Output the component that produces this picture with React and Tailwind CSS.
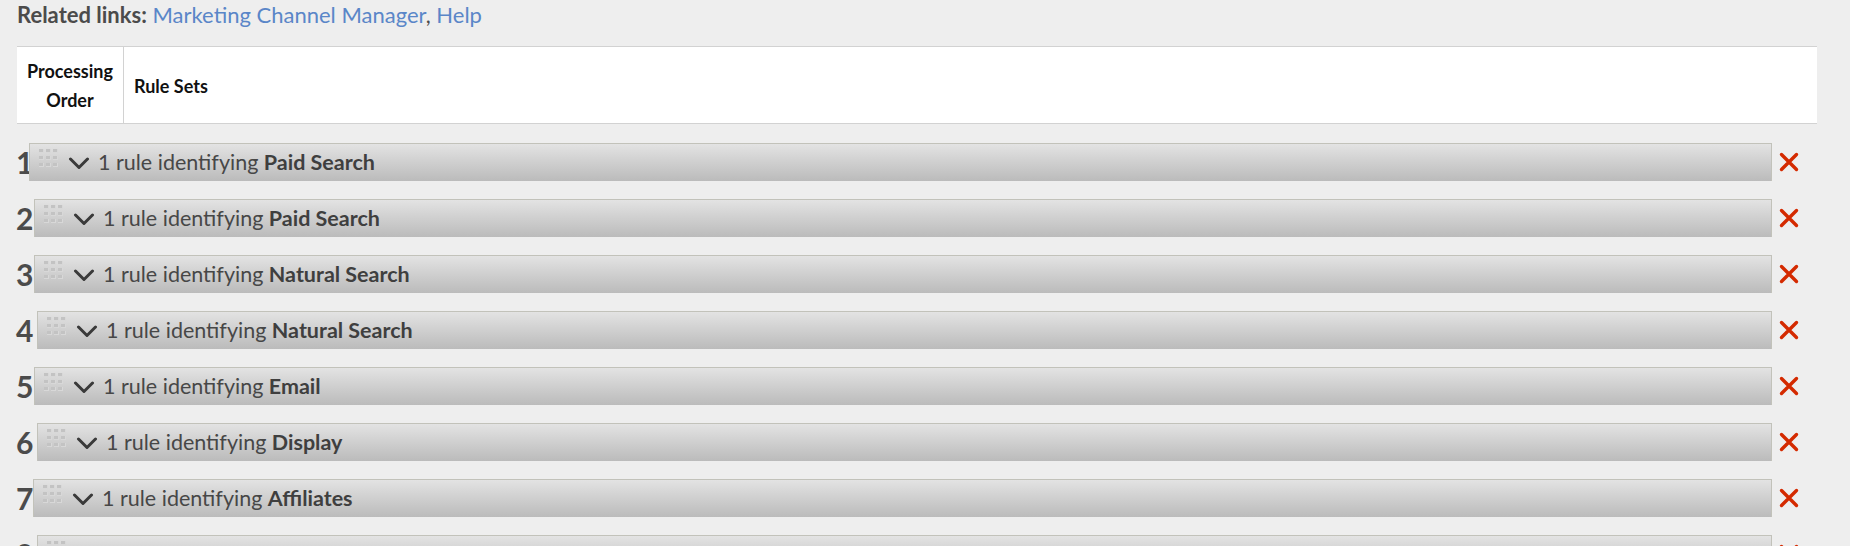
import React from "react";

const rows = [
  { n: "1", w: "w-[11px]", name: "Paid Search" },
  { n: "2", w: "w-[16px]", name: "Paid Search" },
  { n: "3", w: "w-[16px]", name: "Natural Search" },
  { n: "4", w: "w-[19px]", name: "Natural Search" },
  { n: "5", w: "w-[16px]", name: "Email" },
  { n: "6", w: "w-[19px]", name: "Display" },
  { n: "7", w: "w-[15px]", name: "Affiliates" },
  { n: "8", w: "w-[19px]", name: "Referring Domains" },
];

function Handle() {
  return (
    <div className="grid grid-cols-3 gap-x-[2px] gap-y-[3px] self-start mt-[5px]">
      {Array.from({ length: 9 }).map((_, i) => (
        <div key={i} className="w-[5px] h-[4px] bg-[#c3c3c3] border-r border-b border-[#d8d8d8]" />
      ))}
    </div>
  );
}

function Chevron() {
  return (
    <svg width="22" height="13" viewBox="0 0 22 13" className="ml-[10px] mt-[2px]">
      <path d="M2.5 2 L11 10.5 L19.5 2" fill="none" stroke="#3a3a3a" strokeWidth="3" strokeLinecap="round" strokeLinejoin="round" />
    </svg>
  );
}

function XIcon() {
  return (
    <svg width="20" height="20" viewBox="0 0 20 20">
      <path d="M2.5 2.5 L17.5 17.5 M17.5 2.5 L2.5 17.5" fill="none" stroke="#d42a00" strokeWidth="3.4" strokeLinecap="round" />
    </svg>
  );
}

export default function App() {
  return (
    <div className="min-h-screen bg-[#eeeeee] pl-[17px] pr-[33px] pt-[1px] font-['Lato',sans-serif] overflow-hidden h-[546px]">
      <div className="text-[22px] leading-[28px] text-[#4b4b4b]">
        <span className="font-bold">Related links:</span>{" "}
        <span className="text-[#5a86c8]">Marketing Channel Manager</span>,{" "}
        <span className="text-[#5a86c8]">Help</span>
      </div>

      <div className="mt-[17px] bg-white border-y border-[#d2d2d2] flex h-[78px] text-[#111111] font-bold text-[18px]">
        <div className="w-[107px] border-r border-[#d2d2d2] flex flex-col items-center justify-center leading-[29px] pt-[2px]">
          <span>Processing</span>
          <span>Order</span>
        </div>
        <div className="flex items-center pl-[10px] pt-[3px]">Rule Sets</div>
      </div>

      <div className="mt-[19px] flex flex-col gap-[18px]">
        {rows.map((r, i) => (
          <div key={i} className="flex items-center h-[38px]">
            <div className={`${r.w} text-[30px] font-bold leading-none text-[#4b4b4b] shrink-0 -ml-[1px] mr-[2px] tracking-[-2px]`}>
              {r.n}
            </div>
            <div className="flex-1 h-[38px] border border-b-0 border-[#c2c2ba] bg-linear-to-b from-[#e3e3e3] to-[#bbbbbb] flex items-center pl-[9px]">
              <Handle />
              <Chevron />
              <div className="ml-[8px] text-[21.5px] text-[#474747] whitespace-nowrap">
                1 rule identifying <span className="font-bold text-[#3f3f3f]">{r.name}</span>
              </div>
            </div>
            <div className="w-[45px] shrink-0 pl-[7px] flex items-center">
              <XIcon />
            </div>
          </div>
        ))}
      </div>
    </div>
  );
}
